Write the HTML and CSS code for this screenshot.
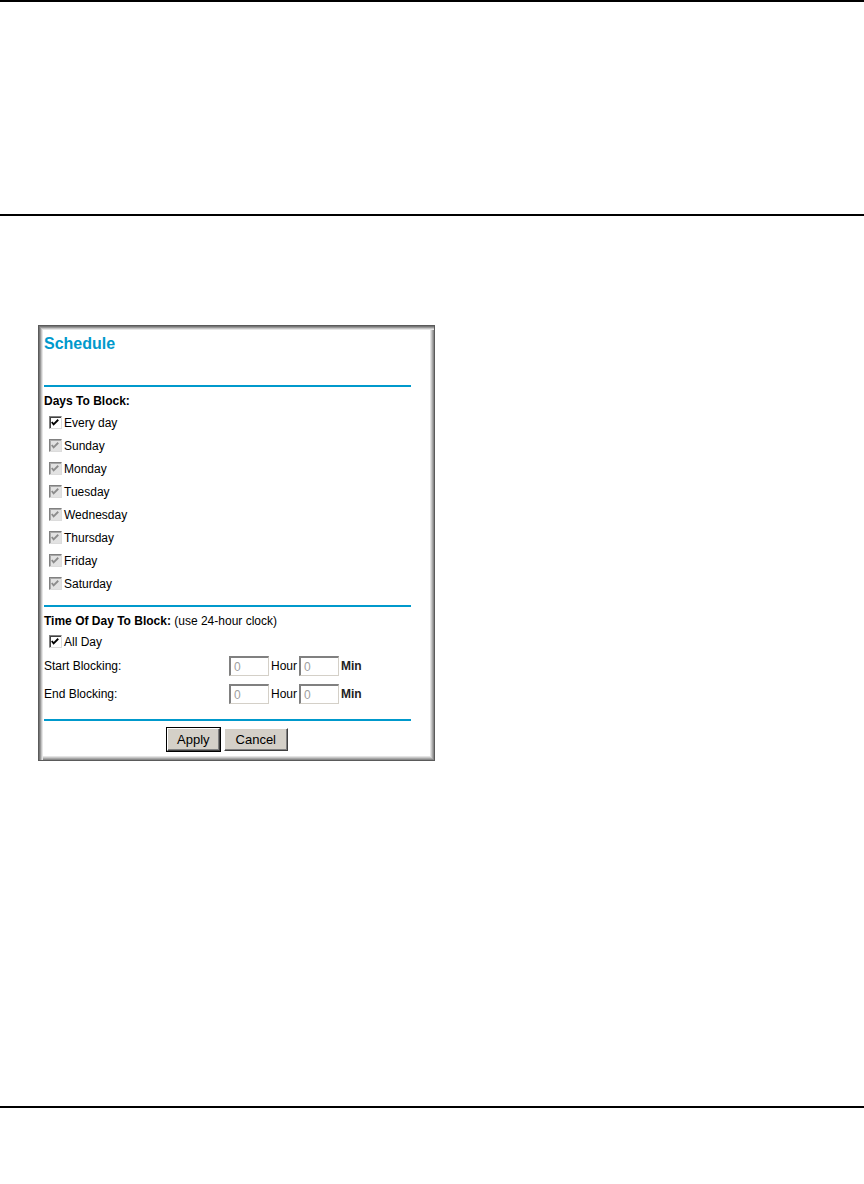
FILE: index.html
```html
<!DOCTYPE html>
<html lang="en">
<head>
    <meta charset="UTF-8">
    <title>Schedule</title>
    <link rel="stylesheet" href="styles.css">
</head>
<body>
    <div class="page-top"></div>

    <div class="figure">
        <div class="frame">
            <h1 class="title">Schedule</h1>
            <div class="rule"></div>

            <div class="heading">Days To Block:</div>
            <label class="check-row"><span class="box"><svg width="13" height="13" viewBox="0 0 13 13"><polyline points="3,6 5,8.5 10,3.5" fill="none" stroke="#000" stroke-width="2"/></svg></span>Every day</label>
            <label class="check-row"><span class="box off"><svg width="13" height="13" viewBox="0 0 13 13"><polyline points="3,6 5,8.5 10,3.5" fill="none" stroke="#8c8c8c" stroke-width="2"/></svg></span>Sunday</label>
            <label class="check-row"><span class="box off"><svg width="13" height="13" viewBox="0 0 13 13"><polyline points="3,6 5,8.5 10,3.5" fill="none" stroke="#8c8c8c" stroke-width="2"/></svg></span>Monday</label>
            <label class="check-row"><span class="box off"><svg width="13" height="13" viewBox="0 0 13 13"><polyline points="3,6 5,8.5 10,3.5" fill="none" stroke="#8c8c8c" stroke-width="2"/></svg></span>Tuesday</label>
            <label class="check-row"><span class="box off"><svg width="13" height="13" viewBox="0 0 13 13"><polyline points="3,6 5,8.5 10,3.5" fill="none" stroke="#8c8c8c" stroke-width="2"/></svg></span>Wednesday</label>
            <label class="check-row"><span class="box off"><svg width="13" height="13" viewBox="0 0 13 13"><polyline points="3,6 5,8.5 10,3.5" fill="none" stroke="#8c8c8c" stroke-width="2"/></svg></span>Thursday</label>
            <label class="check-row"><span class="box off"><svg width="13" height="13" viewBox="0 0 13 13"><polyline points="3,6 5,8.5 10,3.5" fill="none" stroke="#8c8c8c" stroke-width="2"/></svg></span>Friday</label>
            <label class="check-row"><span class="box off"><svg width="13" height="13" viewBox="0 0 13 13"><polyline points="3,6 5,8.5 10,3.5" fill="none" stroke="#8c8c8c" stroke-width="2"/></svg></span>Saturday</label>

            <div class="rule mid"></div>

            <div class="heading"><b>Time Of Day To Block:</b> <span class="note">(use 24-hour clock)</span></div>
            <label class="check-row short"><span class="box"><svg width="13" height="13" viewBox="0 0 13 13"><polyline points="3,6 5,8.5 10,3.5" fill="none" stroke="#000" stroke-width="2"/></svg></span>All Day</label>

            <div class="time-row">
                <span class="time-label">Start Blocking:</span>
                <span class="field">0</span><span class="unit">Hour</span>
                <span class="field">0</span><span class="unit min">Min</span>
            </div>
            <div class="time-row">
                <span class="time-label">End Blocking:</span>
                <span class="field">0</span><span class="unit">Hour</span>
                <span class="field">0</span><span class="unit min">Min</span>
            </div>

            <div class="rule end"></div>

            <div class="buttons">
                <button class="btn default">Apply</button>
                <button class="btn">Cancel</button>
            </div>
        </div>
    </div>

    <div class="page-bottom"></div>
</body>
</html>
```

FILE: styles.css
```css
body {
    margin: 0;
    background: white;
    font-family: "Liberation Sans", Arial, sans-serif;
    font-size: 12px;
    color: #000;
}

/* page rules */
.page-top {
    height: 212px;
    border-top: 2px solid #000;
    border-bottom: 2px solid #000;
}

.figure {
    height: 781px;
    padding-top: 109px;
}

.page-bottom {
    border-top: 2px solid #000;
}

/* schedule screenshot */
.frame {
    width: 397px;
    height: 436px;
    margin-left: 38px;
    box-sizing: border-box;
    padding: 9px 23px 0 5px;
    border: 1px solid #5a5a5a;
    background: #fff;
    box-shadow:
        inset 1px 1px 0 #777,
        inset 2px 2px 0 #999,
        inset 3px 3px 0 #c4c4c4,
        inset 4px 4px 0 #e6e6e6,
        inset -1px -1px 0 #8a8a8a,
        inset -2px -2px 0 #a8a8a8,
        inset -3px -3px 0 #c8c8c8,
        inset -4px -4px 0 #e4e4e4;
}

.title {
    margin: 0 0 32px;
    font-size: 16px;
    line-height: 18px;
    font-weight: bold;
    color: #0099cc;
}

.rule {
    height: 2px;
    background: #0099cc;
}

.rule.mid {
    margin-top: 10px;
}

.rule.end {
    margin-top: 11px;
}

.heading {
    margin: 6px 0 2px;
    line-height: 16px;
    font-weight: bold;
}

.heading .note {
    font-weight: normal;
}

.check-row {
    display: flex;
    align-items: center;
    height: 23px;
    padding-left: 5px;
}

.check-row.short {
    height: 21px;
}

.box {
    display: inline-flex;
    width: 13px;
    height: 13px;
    margin-right: 2px;
    box-sizing: border-box;
    border-top: 1px solid #808080;
    border-left: 1px solid #808080;
    border-right: 1px solid #dcdcdc;
    border-bottom: 1px solid #dcdcdc;
    background: #fff;
    box-shadow: inset 1px 1px 0 #404040;
    overflow: hidden;
}

.box svg {
    margin: -1px 0 0 -1px;
}

.box.off {
    background: #e2e2e2;
    box-shadow: inset 1px 1px 0 #a8a8a8;
}

.time-row {
    display: flex;
    align-items: center;
    height: 28px;
}

.time-label {
    width: 185px;
}

.field {
    width: 40px;
    height: 20px;
    box-sizing: border-box;
    padding: 2px 0 0 3px;
    border-top: 2px solid #808080;
    border-left: 2px solid #808080;
    border-right: 1px solid #d4d0c8;
    border-bottom: 1px solid #d4d0c8;
    color: #a0a0a0;
    line-height: 15px;
}

.unit {
    margin: 0 2px 0 2px;
}

.unit.min {
    font-weight: bold;
    color: #222;
}

.buttons {
    display: flex;
    justify-content: center;
    gap: 4px;
    margin-top: 7px;
}

.btn {
    height: 23px;
    padding: 0 11px;
    font-family: "Liberation Sans", Arial, sans-serif;
    font-size: 13px;
    color: #000;
    background: #d4d0c8;
    border-top: 1px solid #fff;
    border-left: 1px solid #fff;
    border-right: 1px solid #404040;
    border-bottom: 1px solid #404040;
    box-shadow: inset -1px -1px 0 #808080;
}

.btn.default {
    outline: 1px solid #000;
    padding: 0 9px;
}
```
